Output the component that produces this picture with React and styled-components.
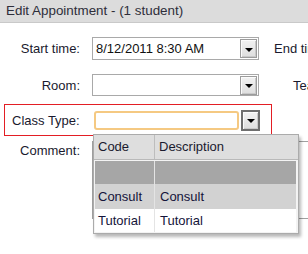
import React from "react";
import styled, { createGlobalStyle } from "styled-components";

const GlobalStyle = createGlobalStyle`
  html, body {
    margin: 0;
    padding: 0;
    background: #ffffff;
    overflow: hidden;
  }
  body {
    font-family: "Liberation Sans", Arial, sans-serif;
    font-size: 13px;
    color: #1a1a2e;
  }
`;

const classTypes = [
  { code: "", description: "", tone: "selected" },
  { code: "Consult", description: "Consult", tone: "hover" },
  { code: "Tutorial", description: "Tutorial", tone: "plain" },
];

const App = () => {
  return (
    <Dialog>
      <GlobalStyle />
      <TitleBar>Edit Appointment - (1 student)</TitleBar>
      <Form>
        <Row $height={23}>
          <Label>Start time:</Label>
          <Combo value="8/12/2011 8:30 AM" />
          <SideLabel $indent={15}>End time:</SideLabel>
        </Row>
        <Row $height={22} $gap={14}>
          <Label>Room:</Label>
          <Combo value="" />
          <SideLabel $indent={34}>Teacher:</SideLabel>
        </Row>
        <Highlight>
          <FreeLabel>Class Type:</FreeLabel>
          <FocusCombo>
            <FocusInput />
            <DropButton $focused>
              <Arrow />
            </DropButton>
            <Dropdown>
              <DropHead>
                <HeadCell $first>Code</HeadCell>
                <HeadCell>Description</HeadCell>
              </DropHead>
              <DropBody>
                {classTypes.map((item, i) => (
                  <DropRow key={i} $tone={item.tone}>
                    <Cell $first>{item.code}</Cell>
                    <Cell>{item.description}</Cell>
                  </DropRow>
                ))}
              </DropBody>
            </Dropdown>
          </FocusCombo>
        </Highlight>
        <CommentRow>
          <Label $top>Comment:</Label>
          <TextArea />
        </CommentRow>
      </Form>
    </Dialog>
  );
};

const Combo = ({ value }) => (
  <ComboBox>
    <ComboText>{value}</ComboText>
    <DropButton>
      <Arrow />
    </DropButton>
  </ComboBox>
);

const Dialog = styled.div`
  width: 308px;
  height: 254px;
  overflow: hidden;
`;

const TitleBar = styled.div`
  height: 22px;
  line-height: 22px;
  padding-left: 6px;
  background: #dcdcdc;
  border-bottom: 1px solid #c9c9c9;
  font-size: 13.4px;
  color: #2e2e3a;
  white-space: nowrap;
`;

const Form = styled.div`
  display: flex;
  flex-direction: column;
  padding-top: 14px;
`;

const Row = styled.div`
  display: flex;
  align-items: center;
  height: ${(p) => p.$height}px;
  margin-top: ${(p) => p.$gap || 0}px;
  white-space: nowrap;
  & > * {
    flex-shrink: 0;
  }
`;

const Label = styled.div`
  flex: 0 0 80px;
  text-align: right;
  padding-right: 12px;
  align-self: ${(p) => (p.$top ? "flex-start" : "center")};
  margin-top: ${(p) => (p.$top ? "2px" : "0")};
`;

const SideLabel = styled.div`
  margin-left: ${(p) => p.$indent}px;
`;

const ComboBox = styled.div`
  display: flex;
  align-items: center;
  width: 167px;
  height: 100%;
  box-sizing: border-box;
  border: 1px solid #a9a9a9;
  background: #fff;
`;

const ComboText = styled.div`
  flex: 1;
  padding-left: 3px;
  font-size: 13px;
  color: #111;
`;

const DropButton = styled.div`
  flex: 0 0 auto;
  display: flex;
  align-items: center;
  justify-content: center;
  width: 17px;
  height: 19px;
  margin-right: 1px;
  box-sizing: border-box;
  border: 1px solid ${(p) => (p.$focused ? "#6f6f6f" : "#9c9c9c")};
  box-shadow: inset 1px 1px 0 #fbfbfb, inset -1px -1px 0 #c9c9c9;
  background: linear-gradient(#f2f2f2, #dedede);
  ${(p) =>
    p.$focused &&
    `
    width: 19px;
    height: 21px;
    margin-left: 2px;
    border-width: 2px;
  `}
`;

const Arrow = styled.span`
  width: 0;
  height: 0;
  margin-top: 2px;
  border-left: 4px solid transparent;
  border-right: 4px solid transparent;
  border-top: 4px solid #000;
`;

const Highlight = styled.div`
  display: flex;
  align-items: center;
  margin: 8px 0 0 4px;
  width: 268px;
  height: 32px;
  box-sizing: border-box;
  border: 1px solid #e31e24;
  padding-left: 7px;
  position: relative;
`;

const FreeLabel = styled.div`
  flex: 0 0 82px;
`;

const FocusCombo = styled.div`
  display: flex;
  align-items: center;
  position: relative;
`;

const FocusInput = styled.div`
  width: 145px;
  height: 19px;
  box-sizing: border-box;
  border: 2px solid #f5c982;
  border-radius: 3px;
  background: #fff;
`;

const Dropdown = styled.div`
  position: absolute;
  top: 24px;
  left: -1px;
  z-index: 5;
  width: 206px;
  box-sizing: border-box;
  border: 1px solid #ababab;
  background: #fff;
  box-shadow: 2px 3px 3px rgba(0, 0, 0, 0.28);
`;

const DropHead = styled.div`
  display: flex;
  height: 24px;
  background: #dedede;
  border-bottom: 1px solid #b9b9b9;
`;

const HeadCell = styled.div`
  display: flex;
  align-items: center;
  box-sizing: border-box;
  padding-left: 4px;
  ${(p) => (p.$first ? "flex: 0 0 61px; border-right: 1px solid #bdbdbd;" : "flex: 1;")}
`;

const DropBody = styled.div`
  border: 1px solid #f3f3f3;
  border-right: 2px solid #f3f3f3;
`;

const rowTones = {
  selected: { bg: "#a6a6a6", height: 23 },
  hover: { bg: "#d2d2d2", height: 25 },
  plain: { bg: "#ffffff", height: 23 },
};

const DropRow = styled.div`
  display: flex;
  height: ${(p) => rowTones[p.$tone].height}px;
  background: ${(p) => rowTones[p.$tone].bg};
`;

const Cell = styled.div`
  display: flex;
  align-items: center;
  box-sizing: border-box;
  padding-left: 3px;
  color: #14143a;
  ${(p) => (p.$first ? "flex: 0 0 60px; border-right: 1px solid #e4e4e4;" : "flex: 1; padding-left: 5px;")}
`;

const CommentRow = styled.div`
  display: flex;
  margin-top: 5px;
  & > * {
    flex-shrink: 0;
  }
`;

const TextArea = styled.div`
  flex: 0 0 300px;
  height: 78px;
  box-sizing: border-box;
  border: 1px solid #a0a0a0;
  background: #fff;
`;

export default App;
